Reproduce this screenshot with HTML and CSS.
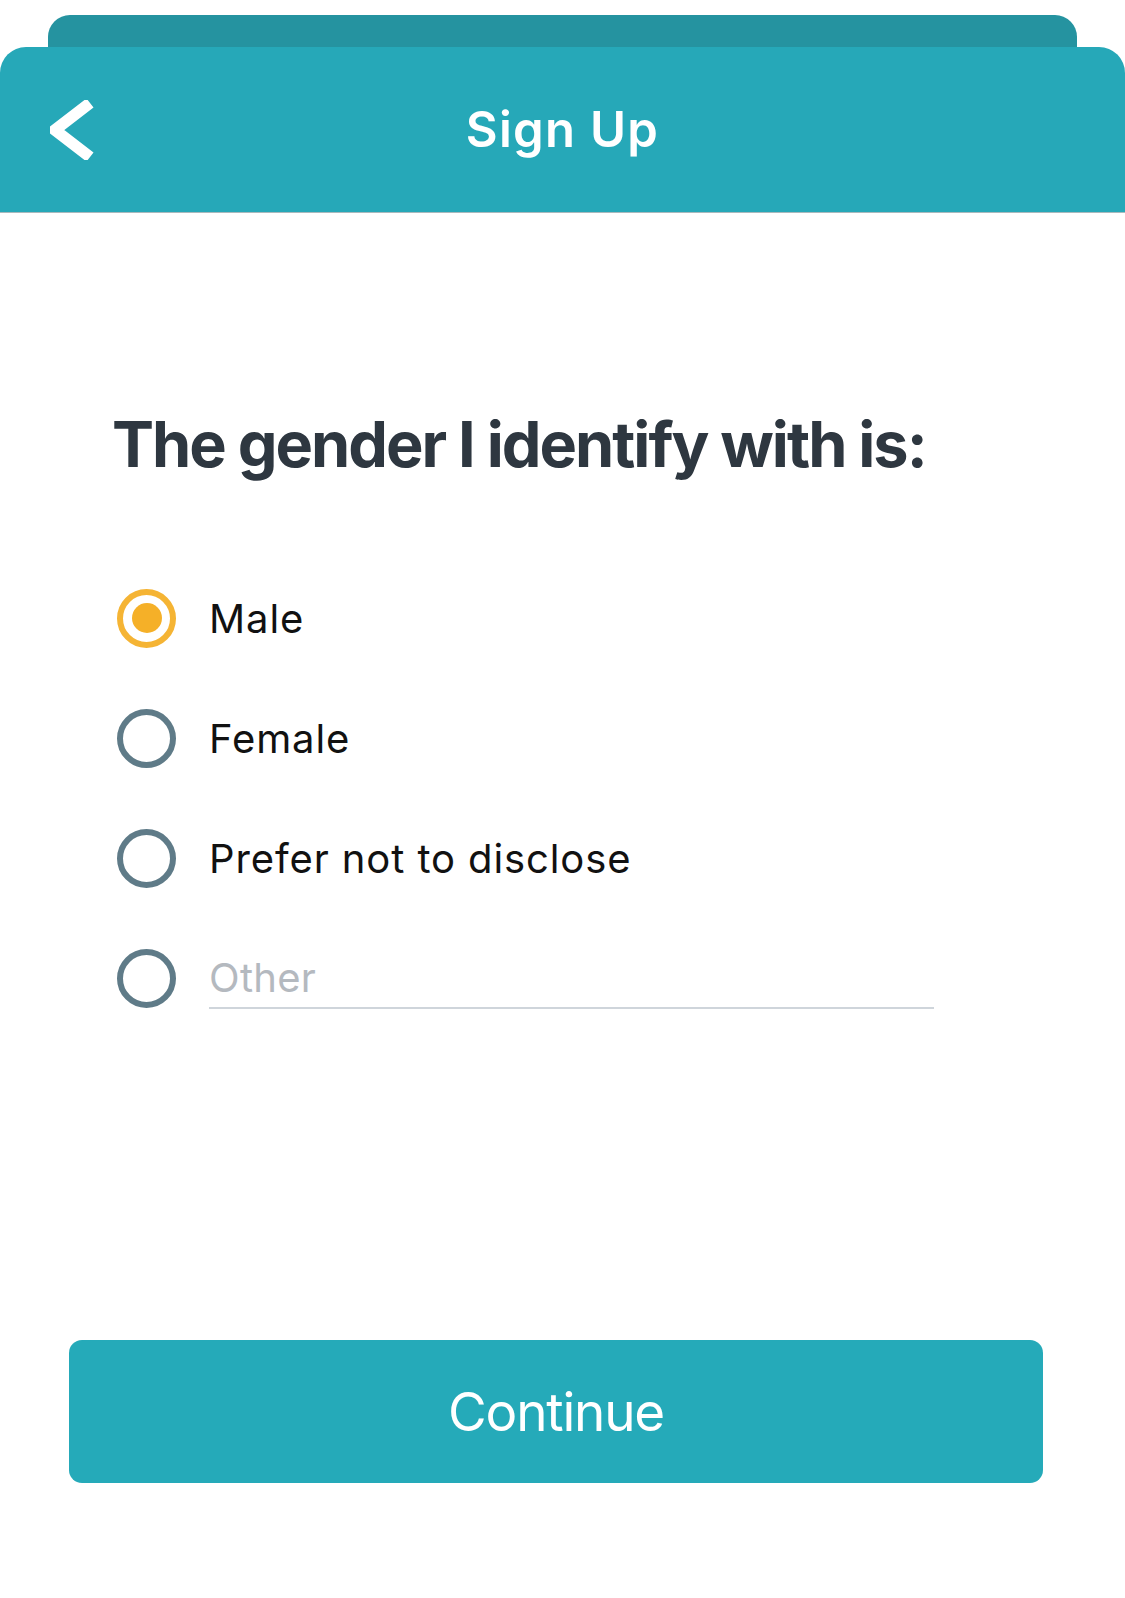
FILE: index.html
```html
<!DOCTYPE html>
<html lang="en">
<head>
<meta charset="utf-8">
<title>Sign Up</title>
<link rel="stylesheet" href="styles.css">
</head>
<body>
<div class="top">
  <div class="back-card"></div>
  <header class="nav">
    <div class="nav-left">
      <svg class="chev" width="44" height="60" viewBox="0 0 44 60" aria-hidden="true">
        <polyline points="40,3 5,30 40,57" fill="none" stroke="#ffffff" stroke-width="11.5" stroke-linejoin="miter"/>
      </svg>
    </div>
    <h1 class="nav-title">Sign Up</h1>
    <div class="nav-right"></div>
  </header>
</div>
<main class="content">
  <h2 class="question">The gender I identify with is:</h2>
  <ul class="options">
    <li class="option"><span class="radio radio-on"><span class="dot"></span></span><span class="label">Male</span></li>
    <li class="option"><span class="radio"></span><span class="label">Female</span></li>
    <li class="option"><span class="radio"></span><span class="label">Prefer not to disclose</span></li>
    <li class="option"><span class="radio"></span><span class="other">Other</span></li>
  </ul>
</main>
<div class="footer">
  <button class="continue" type="button">Continue</button>
</div>
</body>
</html>
```
FILE: styles.css
```css
html, body {
  margin: 0;
  padding: 0;
  background: #ffffff;
}
body {
  width: 1125px;
  font-family: Inter, "Noto Sans", "Liberation Sans", sans-serif;
  color: #111111;
}
.top {
  padding-top: 15px;
}
.back-card {
  margin: 0 48px;
  height: 32px;
  background: #2593a0;
  border-radius: 22px 22px 0 0;
}
.nav {
  height: 165px;
  background: #26a8b8;
  border-radius: 26px 26px 0 0;
  border-bottom: 1px solid #a9b9bd;
  display: grid;
  grid-template-columns: 1fr auto 1fr;
  align-items: center;
}
.nav-left {
  padding-left: 50px;
  display: flex;
  align-items: center;
}
.chev {
  display: block;
}
.nav-title {
  margin: 0;
  color: #ffffff;
  font-size: 49px;
  font-weight: 600;
  letter-spacing: 1.3px;
}
.content {
  padding: 0 0 0 112px;
}
.question {
  margin: 193px 0 0 0;
  font-size: 63px;
  line-height: 76px;
  font-weight: 700;
  color: #2e3740;
  letter-spacing: -2px;
}
.options {
  list-style: none;
  margin: 76px 0 0 0;
  padding: 0;
}
.option {
  height: 120px;
  display: flex;
  align-items: center;
  gap: 33px;
}
.radio {
  box-sizing: border-box;
  width: 59px;
  height: 59px;
  border: 6px solid #5f7b88;
  border-radius: 50%;
  display: flex;
  align-items: center;
  justify-content: center;
  flex: none;
  margin-left: 5px;
}
.radio-on {
  border-color: #f5b434;
}
.dot {
  width: 30px;
  height: 30px;
  border-radius: 50%;
  background: #f5b028;
}
.label {
  font-size: 40px;
  letter-spacing: 0.9px;
  color: #111111;
}
.other {
  font-size: 40px;
  letter-spacing: 0.3px;
  color: #b4b9bf;
  width: 725px;
  box-sizing: border-box;
  padding-top: 6px;
  padding-bottom: 5px;
  border-bottom: 2px solid #cfd5db;
}
.footer {
  padding: 302px 82px 0 69px;
}
.continue {
  display: block;
  width: 100%;
  height: 143px;
  border: 0;
  border-radius: 13px;
  background: #25aab9;
  color: #ffffff;
  font-family: Inter, "Noto Sans", "Liberation Sans", sans-serif;
  font-size: 53px;
  font-weight: 400;
  letter-spacing: -1.2px;
  padding: 0;
}
```
